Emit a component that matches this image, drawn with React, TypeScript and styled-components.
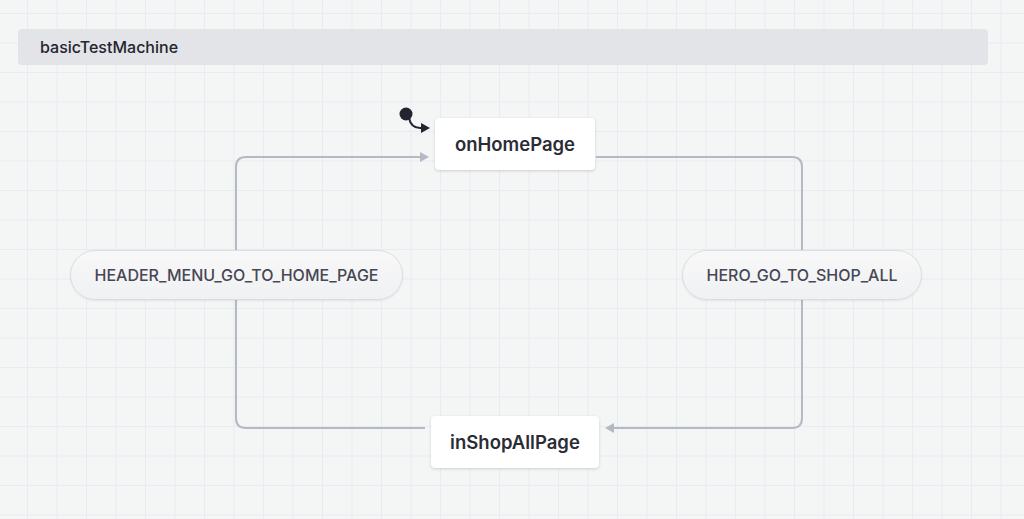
import React from 'react'
import styled, { createGlobalStyle } from 'styled-components'

const Global = createGlobalStyle`
  html, body { margin: 0; padding: 0; }
  body {
    font-family: Inter, "Noto Sans", sans-serif;
    background-color: #f4f5f5;
    background-image:
      linear-gradient(to right, #e6ecf4 1px, transparent 1px),
      linear-gradient(to bottom, #e6ecf4 1px, transparent 1px);
    background-size: 29.5px 29.5px;
    background-position: 27px 13px;
    width: 1024px;
    height: 519px;
    overflow: hidden;
  }
`

const Page = styled.div`
  position: relative;
  width: 1024px;
  height: 519px;
  padding: 29px 36px 0 18px;
  box-sizing: border-box;
`

const MachineBar = styled.div`
  height: 36px;
  background: #e2e4e8;
  border-radius: 4px;
  display: flex;
  align-items: center;
  padding-left: 22px;
  font-size: 16px;
  font-weight: 500;
  color: #24252d;
`

const Edges = styled.svg`
  position: absolute;
  left: 0;
  top: 0;
`

const StateNode = styled.div<{ $x: number; $y: number; $w: number }>`
  position: absolute;
  left: ${p => p.$x}px;
  top: ${p => p.$y}px;
  width: ${p => p.$w}px;
  height: 52px;
  background: #fff;
  border-radius: 4px;
  box-shadow: 0 1px 3px rgba(30, 35, 50, 0.18);
  display: flex;
  align-items: center;
  justify-content: center;
  font-size: 18.5px;
  font-weight: 600;
  color: #2b2c36;
`

const EventPill = styled.div<{ $x: number; $w: number }>`
  position: absolute;
  left: ${p => p.$x}px;
  top: 250px;
  width: ${p => p.$w}px;
  height: 50px;
  box-sizing: border-box;
  border: 1px solid #dcdde2;
  border-radius: 25px;
  background: linear-gradient(#f8f8f9, #f0f1f2);
  box-shadow: 0 1px 2px rgba(30, 35, 50, 0.08);
  display: flex;
  align-items: center;
  justify-content: center;
  font-size: 16px;
  font-weight: 500;
  color: #464754;
`

const stroke = '#b6b8c4'

export default function App() {
  return (
    <>
      <Global />
      <Page>
        <MachineBar>basicTestMachine</MachineBar>
        <Edges width={1024} height={519}>
          <path d="M236 250 V167 Q236 157 246 157 H420" fill="none" stroke={stroke} strokeWidth={2} />
          <path d="M420 152 L429 157 L420 162 Z" fill={stroke} />
          <path d="M236 300 V418 Q236 428 246 428 H425" fill="none" stroke={stroke} strokeWidth={2} />
          <path d="M596 157 H792 Q802 157 802 167 V250" fill="none" stroke={stroke} strokeWidth={2} />
          <path d="M802 300 V418 Q802 428 792 428 H612" fill="none" stroke={stroke} strokeWidth={2} />
          <path d="M614 423 L605 428 L614 433 Z" fill={stroke} />
          <circle cx={406} cy={114} r={6.5} fill="#23242f" />
          <path d="M409 118 Q411 128 420 128 H423" fill="none" stroke="#23242f" strokeWidth={2} />
          <path d="M421 123 L430 128 L421 133 Z" fill="#23242f" />
        </Edges>
        <StateNode $x={435} $y={118} $w={160}>onHomePage</StateNode>
        <StateNode $x={431} $y={416} $w={168}>inShopAllPage</StateNode>
        <EventPill $x={70} $w={333}>HEADER_MENU_GO_TO_HOME_PAGE</EventPill>
        <EventPill $x={682} $w={240}>HERO_GO_TO_SHOP_ALL</EventPill>
      </Page>
    </>
  )
}
